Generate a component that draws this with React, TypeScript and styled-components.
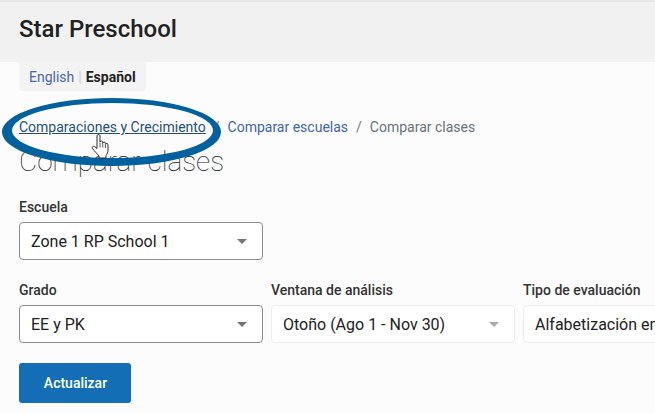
import React from 'react';
import styled, { createGlobalStyle } from 'styled-components';

const GlobalStyle = createGlobalStyle`
    html, body {
        margin: 0;
        padding: 0;
        width: 655px;
        height: 413px;
        overflow: hidden;
        background: #fcfcfc;
        font-family: Roboto, "Liberation Sans", sans-serif;
        color: #212121;
    }
`;

const Page = styled.div`
    position: relative;
    width: 655px;
    height: 413px;
    overflow: hidden;
`;

const Header = styled.header`
    height: 62px;
    box-sizing: border-box;
    padding: 15px 19px 0;
    background: #f1f1f1;
    border-top: 2px solid #e6e6e6;
`;

const SiteTitle = styled.h2`
    margin: 0;
    font-size: 24px;
    line-height: 24px;
    font-weight: 500;
    color: #212121;
`;

const Content = styled.main`
    padding: 0 19px;
`;

const LangBar = styled.div`
    display: inline-flex;
    align-items: center;
    gap: 4px;
    height: 29px;
    padding: 0 10px;
    background: #f3f3f3;
    border-radius: 0 0 4px 4px;
    font-size: 14px;
`;

const LangLink = styled.a`
    color: #4a67ad;
`;

const LangDivider = styled.span`
    color: #c9d2e3;
`;

const LangCurrent = styled.strong`
    font-weight: 700;
    color: #212121;
`;

const Breadcrumbs = styled.nav`
    display: flex;
    align-items: center;
    gap: 8px;
    margin-top: 26px;
    height: 20px;
    font-size: 14px;
    line-height: 20px;
`;

const Crumb = styled.a<{ $hovered?: boolean }>`
    color: ${(p) => (p.$hovered ? '#23507f' : '#3f66a8')};
    text-decoration: ${(p) => (p.$hovered ? 'underline' : 'none')};
`;

const CrumbSeparator = styled.span`
    color: #6f7680;
`;

const CrumbCurrent = styled.span`
    color: #68707a;
`;

const PageTitle = styled.h1`
    margin: 7px 0 0;
    font-size: 28px;
    line-height: 36px;
    font-weight: 100;
    color: #222;
`;

const FieldRow = styled.div<{ $top: number }>`
    display: flex;
    gap: 8px;
    margin-top: ${(p) => p.$top}px;
`;

const Field = styled.div`
    flex: 0 0 244px;
`;

const FieldLabel = styled.label`
    display: block;
    height: 17px;
    margin-bottom: 6px;
    font-size: 14px;
    line-height: 17px;
    font-weight: 500;
    color: #333;
`;

const SelectBox = styled.div<{ $muted?: boolean }>`
    display: flex;
    align-items: center;
    justify-content: space-between;
    box-sizing: border-box;
    height: 38px;
    padding: 0 15px 0 11px;
    background: #fff;
    border: 1px solid ${(p) => (p.$muted ? '#ededed' : '#8c8c8c')};
    border-radius: 4px;
    font-size: 16px;
    color: #212121;
    white-space: nowrap;
    overflow: hidden;
`;

const Caret = styled.span<{ $muted?: boolean }>`
    flex: none;
    width: 0;
    height: 0;
    border-left: 5px solid transparent;
    border-right: 5px solid transparent;
    border-top: 5px solid ${(p) => (p.$muted ? '#a8a8a8' : '#757575')};
`;

const SubmitButton = styled.button`
    display: block;
    width: 112px;
    height: 40px;
    margin-top: 20px;
    padding: 0 0 0 1px;
    border: 0;
    border-radius: 3px;
    background: #136eb5;
    color: #fff;
    font-family: inherit;
    font-size: 14px;
    font-weight: 500;
`;

const CircleMark = styled.svg`
    position: absolute;
    left: 0;
    top: 96px;
`;

const HandCursor = styled.svg`
    position: absolute;
    left: 90px;
    top: 133px;
`;

const App = () => (
    <Page>
        <GlobalStyle />
        <Header>
            <SiteTitle>Star Preschool</SiteTitle>
        </Header>
        <Content>
            <LangBar>
                <LangLink>English</LangLink>
                <LangDivider>|</LangDivider>
                <LangCurrent>Español</LangCurrent>
            </LangBar>
            <Breadcrumbs>
                <Crumb $hovered>Comparaciones y Crecimiento</Crumb>
                <CrumbSeparator>/</CrumbSeparator>
                <Crumb>Comparar escuelas</Crumb>
                <CrumbSeparator>/</CrumbSeparator>
                <CrumbCurrent>Comparar clases</CrumbCurrent>
            </Breadcrumbs>
            <PageTitle>Comparar clases</PageTitle>
            <FieldRow $top={19}>
                <Field>
                    <FieldLabel>Escuela</FieldLabel>
                    <SelectBox>
                        Zone 1 RP School 1
                        <Caret />
                    </SelectBox>
                </Field>
            </FieldRow>
            <FieldRow $top={22}>
                <Field>
                    <FieldLabel>Grado</FieldLabel>
                    <SelectBox>
                        EE y PK
                        <Caret />
                    </SelectBox>
                </Field>
                <Field>
                    <FieldLabel>Ventana de análisis</FieldLabel>
                    <SelectBox $muted>
                        Otoño (Ago 1 - Nov 30)
                        <Caret $muted />
                    </SelectBox>
                </Field>
                <Field>
                    <FieldLabel>Tipo de evaluación</FieldLabel>
                    <SelectBox $muted>
                        Alfabetización en inglés
                        <Caret $muted />
                    </SelectBox>
                </Field>
            </FieldRow>
            <SubmitButton>Actualizar</SubmitButton>
        </Content>
        <CircleMark width="226" height="74" viewBox="0 0 226 74">
            {/* hand drawn ring, heavier at the ends and the bottom than at the top */}
            <path
                fillRule="evenodd"
                fill="#01619f"
                d="M2 36a109.500 34 0 1 0 219 0a109.500 34 0 1 0-219 0ZM12 34.500a100.500 27.500 0 1 0 201 0a100.500 27.500 0 1 0-201 0Z"
            />
        </CircleMark>
        <HandCursor width="22" height="27" viewBox="0 0 22 27">
            <path
                d="M7 3c0-2 3-2 3 0v6c.3-1.300 2.700-1.300 2.700.2v.8c.3-1.300 2.700-1.100 2.700.4v.6c.4-1.100 2.600-.8 2.600.7V17c0 2.500-.8 4-2 5.500V25H9v-2c-2-2-4-4.500-6.500-7.500-1-1.300.6-2.900 2-1.900L7 15.500V3Z"
                fill="#fff"
                stroke="#2b2b2b"
                strokeWidth="1"
                strokeLinejoin="round"
            />
            <path d="M10 9.500v5M12.700 10v4.500M15.400 11v4" fill="none" stroke="#2b2b2b" strokeWidth="0.800" />
        </HandCursor>
    </Page>
);

export default App;
